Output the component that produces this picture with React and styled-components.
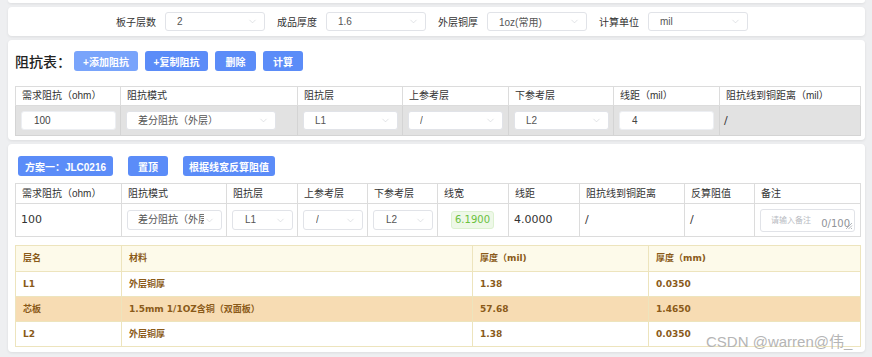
import React from 'react';
import styled, { createGlobalStyle } from 'styled-components';
import { ChevronDown } from 'lucide-react';

const GlobalStyle = createGlobalStyle`
  body {
    margin: 0;
    background: #eeeff1;
    font-family: "Liberation Sans", "Noto Sans CJK SC", sans-serif;
    color: #303133;
  }
`;

const Page = styled.div`
  display: flex;
  flex-direction: column;
  gap: 4px;
  padding: 0 7px 6px 8px;
  position: relative;
`;

const Card = styled.div`
  background: #fff;
  border-radius: 4px;
  box-shadow: 0 1px 3px rgba(0, 0, 0, 0.08);
`;

const TopEdge = styled(Card)`
  height: 3px;
  border-radius: 0 0 4px 4px;
`;

const FilterCard = styled(Card)`
  height: 29px;
  display: flex;
  align-items: center;
  gap: 12px;
  padding-left: 108px;
`;

const FilterItem = styled.div`
  display: flex;
  align-items: center;
  gap: 9px;
`;

const FilterLabel = styled.span`
  font-size: 10px;
  color: #333;
  font-family: "Noto Sans CJK SC", sans-serif;
  white-space: nowrap;
`;

const SelectBox = styled.div`
  box-sizing: border-box;
  width: ${(p) => p.$w || 100}px;
  height: ${(p) => p.$h || 19}px;
  background: #fff;
  border: 1px solid #e1e3e8;
  border-radius: 3px;
  display: flex;
  align-items: center;
  justify-content: space-between;
  padding: 0 6px 0 ${(p) => p.$pl || 11}px;
  font-size: 10px;
  color: #555;
  font-family: "Liberation Sans", "Noto Sans CJK SC", sans-serif;
  overflow: hidden;
  white-space: nowrap;
  svg {
    flex-shrink: 0;
    color: #c8cbd1;
  }
`;

const SelectText = styled.span`
  overflow: hidden;
  white-space: nowrap;
`;

const Section = styled(Card)`
  padding: ${(p) => p.$pad};
  display: flex;
  flex-direction: column;
`;

const ToolRow = styled.div`
  display: flex;
  align-items: center;
  gap: ${(p) => p.$gap || 7}px;
  padding-left: ${(p) => p.$pl || 0}px;
  margin-bottom: ${(p) => p.$mb || 0}px;
`;

const Title = styled.h2`
  margin: 0;
  width: 52px;
  font-size: 14px;
  font-weight: 500;
  line-height: 20px;
  color: #222;
  white-space: nowrap;
  font-family: "Noto Sans CJK SC", sans-serif;
`;

const Button = styled.button`
  box-sizing: border-box;
  width: ${(p) => p.$w}px;
  height: 20px;
  border: none;
  border-radius: 3px;
  background: ${(p) => (p.$light ? '#79a4fb' : '#5b8cf8')};
  color: #fff;
  font-size: 10px;
  font-weight: 600;
  font-family: "Liberation Sans", "Noto Sans CJK SC", sans-serif;
  padding: 0;
  white-space: nowrap;
`;

const Table = styled.table`
  border-collapse: collapse;
  table-layout: fixed;
  width: 100%;
  font-size: 10px;
`;

const Col = styled.col`
  width: ${(p) => p.$w}px;
`;

const Row = styled.tr`
  height: ${(p) => p.$h}px;
`;

const Th = styled.th`
  border: 1px solid #dcdcdc;
  padding: 0 0 0 6px;
  text-align: left;
  font-weight: 400;
  font-size: 10px;
  line-height: 12px;
  color: #333;
  font-family: "Liberation Sans", "Noto Sans CJK SC", sans-serif;
  white-space: nowrap;
  overflow: hidden;
  background: #fff;
`;

const Td = styled.td`
  border: 1px solid ${(p) => (p.$grey ? '#d4d4d4' : '#dcdcdc')};
  background: ${(p) => (p.$grey ? '#e2e2e2' : '#fff')};
  padding: 0 ${(p) => (p.$pad != null ? p.$pad : 5)}px;
  font-size: 11px;
  line-height: 12px;
  color: #333;
  font-family: "DejaVu Sans", "Noto Sans CJK SC", sans-serif;
  white-space: nowrap;
  overflow: hidden;
`;

const TextInput = styled.div`
  box-sizing: border-box;
  width: ${(p) => p.$w}px;
  height: 19px;
  background: #fff;
  border-radius: 3px;
  border: 1px solid #eceef2;
  display: flex;
  align-items: center;
  padding-left: 12px;
  font-size: 10px;
  color: #444;
  font-family: "Liberation Sans", sans-serif;
`;

const GreenTag = styled.span`
  display: inline-flex;
  align-items: center;
  justify-content: center;
  box-sizing: border-box;
  width: 43px;
  height: 18px;
  margin-left: 8px;
  border-radius: 3px;
  background: #eef8e8;
  border: 1px solid #dcf1d0;
  color: #6ac13e;
  font-size: 10px;
  font-family: "DejaVu Sans", sans-serif;
`;

const NoteArea = styled.div`
  position: relative;
  box-sizing: border-box;
  width: 95px;
  height: 23px;
  border: 1px solid #e1e3e8;
  border-radius: 3px;
  display: flex;
  align-items: center;
  padding-left: 10px;
  font-size: 8px;
  color: #b8bbc2;
  font-family: "Noto Sans CJK SC", sans-serif;
`;

const Counter = styled.span`
  position: absolute;
  right: 4px;
  bottom: 1px;
  font-size: 10px;
  line-height: 12px;
  color: #909399;
  font-family: "DejaVu Sans", sans-serif;
  background: #fff;
`;

const ResizeGrip = styled.svg`
  position: absolute;
  right: 1px;
  bottom: 1px;
`;

const LayerTable = styled.table`
  border-collapse: collapse;
  table-layout: fixed;
  width: 100%;
  margin-top: 8px;
`;

const LTh = styled.th`
  border: 1px solid #ede4bd;
  background: #fdfaea;
  padding: 0 0 0 7px;
  text-align: left;
  font-size: 9px;
  line-height: 11px;
  font-weight: 700;
  color: #8a5a19;
  font-family: "DejaVu Sans", "Noto Sans CJK SC", sans-serif;
`;

const LTd = styled.td`
  border: 1px solid #ede4bd;
  background: ${(p) => (p.$core ? '#f7dcb3' : '#fff')};
  padding: 0 0 0 7px;
  font-size: 9px;
  line-height: 11px;
  font-weight: 600;
  color: #8a5a19;
  font-family: "DejaVu Sans", "Noto Sans CJK SC", sans-serif;
`;

const Watermark = styled.div`
  position: absolute;
  left: 706px;
  top: 330px;
  font-size: 15px;
  color: #b5b5b5;
  font-family: "Liberation Sans", "Noto Sans CJK SC", sans-serif;
  white-space: nowrap;
`;

const Select = ({ value, w, h, pl }) => (
  <SelectBox $w={w} $h={h} $pl={pl}>
    <SelectText>{value}</SelectText>
    <ChevronDown size={11} strokeWidth={1.2} />
  </SelectBox>
);

const filters = [
  ['板子层数', '2'],
  ['成品厚度', '1.6'],
  ['外层铜厚', '1oz(常用)'],
  ['计算单位', 'mil'],
];

const layers = [
  { name: '层名', mat: '材料', mil: '厚度（mil)', mm: '厚度（mm)' },
  { name: 'L1', mat: '外层铜厚', mil: '1.38', mm: '0.0350' },
  { name: '芯板', mat: '1.5mm 1/1OZ含铜（双面板）', mil: '57.68', mm: '1.4650', core: true },
  { name: 'L2', mat: '外层铜厚', mil: '1.38', mm: '0.0350' },
];

const Grip = () => (
  <ResizeGrip width="8" height="8" viewBox="0 0 8 8">
    <path d="M7 1L1 7M7 3.5L3.5 7M7 6L6 7" stroke="#a0a4ab" strokeWidth="0.8" />
  </ResizeGrip>
);

export default function App() {
  const head = layers[0];
  return (
    <>
      <GlobalStyle />
      <Page>
        <TopEdge />
        <FilterCard>
          {filters.map(([label, value]) => (
            <FilterItem key={label}>
              <FilterLabel>{label}</FilterLabel>
              <Select value={value} w={100} h={19} />
            </FilterItem>
          ))}
        </FilterCard>

        <Section $pad="11px 5px 4px 7px">
          <ToolRow $mb={15}>
            <Title>阻抗表：</Title>
            <Button $w={64} $light>+添加阻抗</Button>
            <Button $w={63}>+复制阻抗</Button>
            <Button $w={41}>删除</Button>
            <Button $w={40}>计算</Button>
          </ToolRow>
          <Table>
            <colgroup>
              <Col $w={105} /><Col $w={177} /><Col $w={105} /><Col $w={106} />
              <Col $w={105} /><Col $w={106} /><Col $w={141} />
            </colgroup>
            <thead>
              <Row $h={19}>
                <Th>需求阻抗（ohm）</Th>
                <Th>阻抗模式</Th>
                <Th>阻抗层</Th>
                <Th>上参考层</Th>
                <Th>下参考层</Th>
                <Th>线距（mil）</Th>
                <Th>阻抗线到铜距离（mil）</Th>
              </Row>
            </thead>
            <tbody>
              <Row $h={30}>
                <Td $grey><TextInput $w={95}>100</TextInput></Td>
                <Td $grey><Select value="差分阻抗（外层）" w={150} h={19} pl={11} /></Td>
                <Td $grey><Select value="L1" w={95} h={19} pl={11} /></Td>
                <Td $grey><Select value="/" w={95} h={19} pl={11} /></Td>
                <Td $grey><Select value="L2" w={95} h={19} pl={11} /></Td>
                <Td $grey><TextInput $w={95}>4</TextInput></Td>
                <Td $grey $pad={4}>/</Td>
              </Row>
            </tbody>
          </Table>
        </Section>

        <Section $pad="12px 5px 5px 7px">
          <ToolRow $gap={15} $pl={3} $mb={7}>
            <Button $w={95}>方案一：JLC0216</Button>
            <Button $w={40}>置顶</Button>
            <Button $w={92}>根据线宽反算阻值</Button>
          </ToolRow>
          <Table>
            <colgroup>
              <Col $w={106} /><Col $w={105} /><Col $w={71} /><Col $w={70} /><Col $w={70} />
              <Col $w={71} /><Col $w={71} /><Col $w={105} /><Col $w={70} /><Col $w={106} />
            </colgroup>
            <thead>
              <Row $h={20}>
                <Th>需求阻抗（ohm）</Th>
                <Th>阻抗模式</Th>
                <Th>阻抗层</Th>
                <Th>上参考层</Th>
                <Th>下参考层</Th>
                <Th>线宽</Th>
                <Th>线距</Th>
                <Th>阻抗线到铜距离</Th>
                <Th>反算阻值</Th>
                <Th>备注</Th>
              </Row>
            </thead>
            <tbody>
              <Row $h={33}>
                <Td>100</Td>
                <Td><Select value="差分阻抗（外层）" w={95} h={20} pl={10} /></Td>
                <Td><Select value="L1" w={61} h={20} pl={12} /></Td>
                <Td><Select value="/" w={60} h={20} pl={12} /></Td>
                <Td><Select value="L2" w={60} h={20} pl={12} /></Td>
                <Td><GreenTag>6.1900</GreenTag></Td>
                <Td>4.0000</Td>
                <Td>/</Td>
                <Td>/</Td>
                <Td>
                  <NoteArea>
                    请输入备注
                    <Counter>0/100</Counter>
                    <Grip />
                  </NoteArea>
                </Td>
              </Row>
            </tbody>
          </Table>
          <LayerTable>
            <colgroup>
              <Col $w={106} /><Col $w={351} /><Col $w={176} /><Col $w={212} />
            </colgroup>
            <thead>
              <Row $h={26}>
                <LTh>{head.name}</LTh>
                <LTh>{head.mat}</LTh>
                <LTh>{head.mil}</LTh>
                <LTh>{head.mm}</LTh>
              </Row>
            </thead>
            <tbody>
              {layers.slice(1).map((l) => (
                <Row $h={25} key={l.name}>
                  <LTd $core={l.core}>{l.name}</LTd>
                  <LTd $core={l.core}>{l.mat}</LTd>
                  <LTd $core={l.core}>{l.mil}</LTd>
                  <LTd $core={l.core}>{l.mm}</LTd>
                </Row>
              ))}
            </tbody>
          </LayerTable>
        </Section>
        <Watermark>CSDN @warren@伟_</Watermark>
      </Page>
    </>
  );
}
